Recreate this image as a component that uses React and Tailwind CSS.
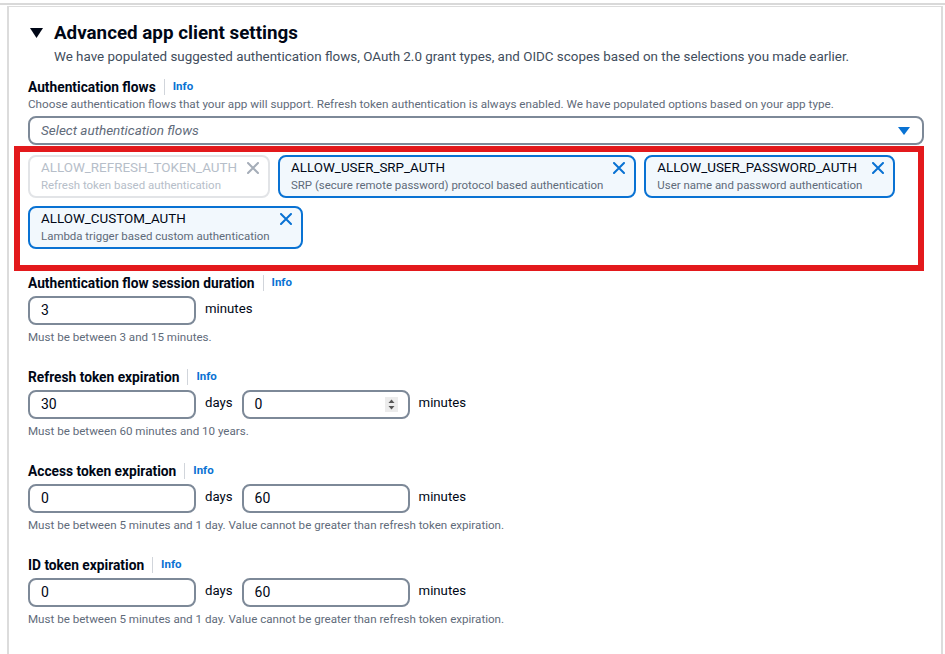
const tokens = [
  { title: 'ALLOW_REFRESH_TOKEN_AUTH', desc: 'Refresh token based authentication', disabled: true },
  { title: 'ALLOW_USER_SRP_AUTH', desc: 'SRP (secure remote password) protocol based authentication' },
  { title: 'ALLOW_USER_PASSWORD_AUTH', desc: 'User name and password authentication' },
  { title: 'ALLOW_CUSTOM_AUTH', desc: 'Lambda trigger based custom authentication' },
]

const Label = ({ children }) => (
  <div className="flex items-center h-[20px]">
    <span className="text-[13.75px] font-bold text-[#000716] leading-[20px]">{children}</span>
    <span className="mx-[8px] w-px h-[16px] bg-[#d1d5db]" />
    <span className="text-[11.5px] font-bold text-[#0972d3]">Info</span>
  </div>
)

const Input = ({ value, spinner }) => (
  <div className="relative w-[168px] h-[29px] border-2 border-[#7d8998] rounded-[8px] flex items-center pl-[11px] text-[14px] text-[#000716]">
    {value}
    {spinner && (
      <div className="absolute right-[10px] top-[5px] w-[13px] h-[15px] bg-[#ececec] flex items-center justify-center">
        <svg width="7" height="11" viewBox="0 0 7 11">
          <path d="M3.5 0.5 L6.5 4 L0.5 4 Z" fill="#555" />
          <path d="M3.5 10.5 L6.5 7 L0.5 7 Z" fill="#555" />
        </svg>
      </div>
    )}
  </div>
)

const Unit = ({ children }) => (
  <span className="mx-[9px] text-[13.2px] text-[#000716] leading-[20px] self-start mt-[3px]">{children}</span>
)

const Help = ({ children }) => (
  <div className="mt-[4px] text-[11.6px] leading-[16px] text-[#5f6b7a]">{children}</div>
)

const CloseIcon = ({ color }) => (
  <svg width="12" height="12" viewBox="0 0 12 12" className="ml-[10px] mt-[3px] shrink-0">
    <path d="M1 1 L11 11 M11 1 L1 11" stroke={color} strokeWidth="2" strokeLinecap="round" />
  </svg>
)

const Token = ({ title, desc, disabled }) => (
  <div
    className={`h-[43px] flex items-start pl-[11px] pr-[9px] pt-[2px] rounded-[8px] border-2 ${
      disabled ? 'border-[#e2e4e7] bg-white' : 'border-[#0972d3] bg-[#f2f8fd]'
    }`}
  >
    <div className="flex flex-col">
      <span className={`text-[13.4px] leading-[18px] ${disabled ? 'text-[#b6bec9]' : 'text-[#000716]'}`}>{title}</span>
      <span className={`text-[11.45px] leading-[16px] ${disabled ? 'text-[#b6bec9]' : 'text-[#5f6b7a]'}`}>{desc}</span>
    </div>
    <CloseIcon color={disabled ? '#a5adb8' : '#0972d3'} />
  </div>
)

const DurationField = ({ label, days, minutes, help, spinner, single, first }) => (
  <div className={first ? 'mt-[2px]' : 'mt-[22px]'}>
    <Label>{label}</Label>
    <div className="flex mt-[3px]">
      <Input value={days} />
      {single ? (
        <Unit>minutes</Unit>
      ) : (
        <>
          <Unit>days</Unit>
          <Input value={minutes} spinner={spinner} />
          <Unit>minutes</Unit>
        </>
      )}
    </div>
    <Help>{help}</Help>
  </div>
)

export default function App() {
  return (
    <div className="w-[945px] h-[654px] bg-white overflow-hidden font-['Roboto',sans-serif] pt-[3px]">
      <div className="border-t-2 border-[#d9d9d9]" />
      <div className="ml-[7px] mr-[2px] mt-[1px] h-[660px] border-l-2 border-r-2 border-t border-[#dcdcdc] pl-[19px] pr-[17px] pt-[14px]">
        <div className="flex items-center h-[24px]">
          <svg width="13" height="10" viewBox="0 0 13 10" className="ml-[2px] mr-[11px]">
            <path d="M0 0 L13 0 L6.5 10 Z" fill="#000716" />
          </svg>
          <span className="text-[18.8px] font-bold text-[#000716] leading-[24px]">Advanced app client settings</span>
        </div>
        <div className="ml-[26px] mt-[2px] text-[13.4px] leading-[20px] text-[#414d5c]">
          We have populated suggested authentication flows, OAuth 2.0 grant types, and OIDC scopes based on the selections you made earlier.
        </div>

        <div className="mt-[10px]">
          <Label>Authentication flows</Label>
          <div className="text-[11.7px] leading-[16px] text-[#5f6b7a] -mt-px">
            Choose authentication flows that your app will support. Refresh token authentication is always enabled. We have populated options based on your app type.
          </div>
          <div className="mt-[4px] h-[29px] border-2 border-[#7d8998] rounded-[8px] flex items-center justify-between pl-[11px] pr-[12px]">
            <span className="text-[13.5px] italic text-[#5f6b7a]">Select authentication flows</span>
            <svg width="12" height="8" viewBox="0 0 12 8">
              <path d="M0 0 L12 0 L6 8 Z" fill="#0972d3" />
            </svg>
          </div>
          <div className="ml-[-14px] mt-px h-[125px] border-[6px] border-[#e3191c] pl-[8px] pt-[3px]">
            <div className="flex flex-wrap gap-[8px]">
              {tokens.map((t) => (
                <Token key={t.title} {...t} />
              ))}
            </div>
          </div>
        </div>

        <DurationField first label="Authentication flow session duration" days="3" single help="Must be between 3 and 15 minutes." />
        <DurationField label="Refresh token expiration" days="30" minutes="0" spinner help="Must be between 60 minutes and 10 years." />
        <DurationField
          label="Access token expiration"
          days="0"
          minutes="60"
          help="Must be between 5 minutes and 1 day. Value cannot be greater than refresh token expiration."
        />
        <DurationField
          label="ID token expiration"
          days="0"
          minutes="60"
          help="Must be between 5 minutes and 1 day. Value cannot be greater than refresh token expiration."
        />
      </div>
    </div>
  )
}
